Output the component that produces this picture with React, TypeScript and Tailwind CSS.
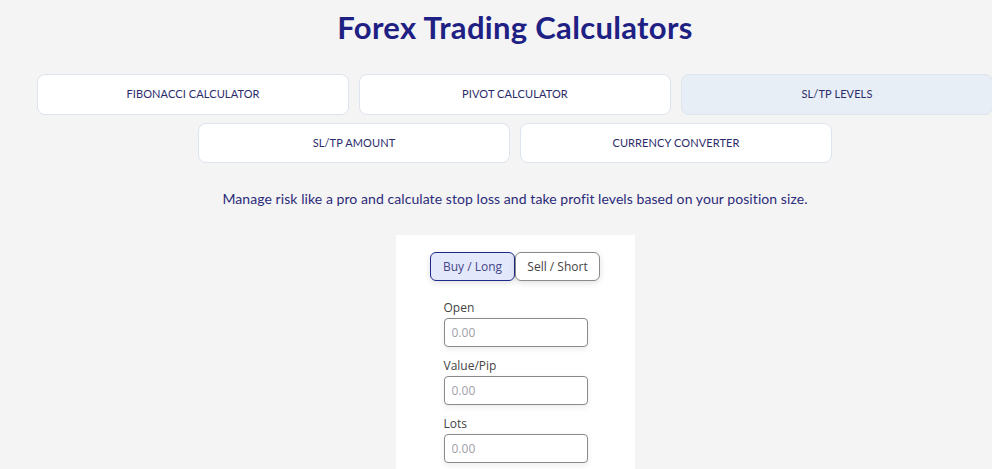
import React from "react";

const tabs1 = ["FIBONACCI CALCULATOR", "PIVOT CALCULATOR", "SL/TP LEVELS"];
const tabs2 = ["SL/TP AMOUNT", "CURRENCY CONVERTER"];

function Tab({ label, active }: { label: string; active?: boolean }) {
  return (
    <div
      className={`w-[312px] flex items-center justify-center rounded-[8px] border text-[11px] tracking-[0.01em] text-[#2b2b6b] ${
        active ? "bg-[#e8eef6] border-[#dde4ee]" : "bg-white border-[#dde4ee]"
      }`}
      style={{ fontFamily: "'Lato', 'Open Sans', sans-serif" }}
    >
      {label}
    </div>
  );
}

function Field({ label }: { label: string }) {
  return (
    <div className="flex flex-col">
      <label className="text-[12px] text-[#444] leading-[16px] mb-[2px]">{label}</label>
      <input
        placeholder="0.00"
        className="w-[144px] h-[29px] rounded-[4px] border border-[#8a8a8a] px-[7px] text-[12px] placeholder:text-[#a0a0a8] bg-white outline-none shadow-[0_2px_6px_rgba(0,0,0,0.08)]"
      />
    </div>
  );
}

export default function App() {
  return (
    <div
      className="min-h-[469px] bg-[#f4f4f4] overflow-hidden"
      style={{ fontFamily: "'Open Sans', 'Lato', sans-serif" }}
    >
      <div className="pl-[37px]">
        <div className="w-[956px]">
          <h1
            className="pt-[6px] h-[74px] text-center text-[31px] font-bold text-[#1e2183] leading-[42px]"
            style={{ fontFamily: "'Lato', 'Open Sans', sans-serif", letterSpacing: "0.01em" }}
          >
            Forex Trading Calculators
          </h1>
          <div className="flex flex-col gap-[8px]">
            <div className="flex justify-center gap-[10px] h-[41px]">
              {tabs1.map((t, i) => (
                <Tab key={t} label={t} active={i === 2} />
              ))}
            </div>
            <div className="flex justify-center gap-[10px] h-[40px]">
              {tabs2.map((t) => (
                <Tab key={t} label={t} />
              ))}
            </div>
          </div>
          <p
            className="mt-[26px] text-center text-[14px] text-[#2b2b7a] leading-[20px] tracking-[0.005em]"
            style={{ fontFamily: "'Lato', 'Open Sans', sans-serif" }}
          >
            Manage risk like a pro and calculate stop loss and take profit levels based on your position size.
          </p>
          <div className="flex justify-center mt-[26px]">
            <div className="w-[239px] bg-white pt-[17px] pb-[20px] flex flex-col items-center">
              <div className="flex">
                <button className="w-[85px] h-[29px] rounded-[6px] border border-[#1e2a8a] bg-[#e3e9fb] text-[12px] text-[#44448a] shadow-[0_2px_6px_rgba(0,0,0,0.12)]">
                  Buy / Long
                </button>
                <button className="w-[85px] h-[29px] rounded-[6px] border border-[#8a8a8a] bg-white text-[12px] text-[#444] shadow-[0_2px_6px_rgba(0,0,0,0.12)]">
                  Sell / Short
                </button>
              </div>
              <div className="mt-[19px] flex flex-col gap-[11px] self-start ml-[48px]">
                <Field label="Open" />
                <Field label="Value/Pip" />
                <Field label="Lots" />
              </div>
            </div>
          </div>
        </div>
      </div>
    </div>
  );
}
